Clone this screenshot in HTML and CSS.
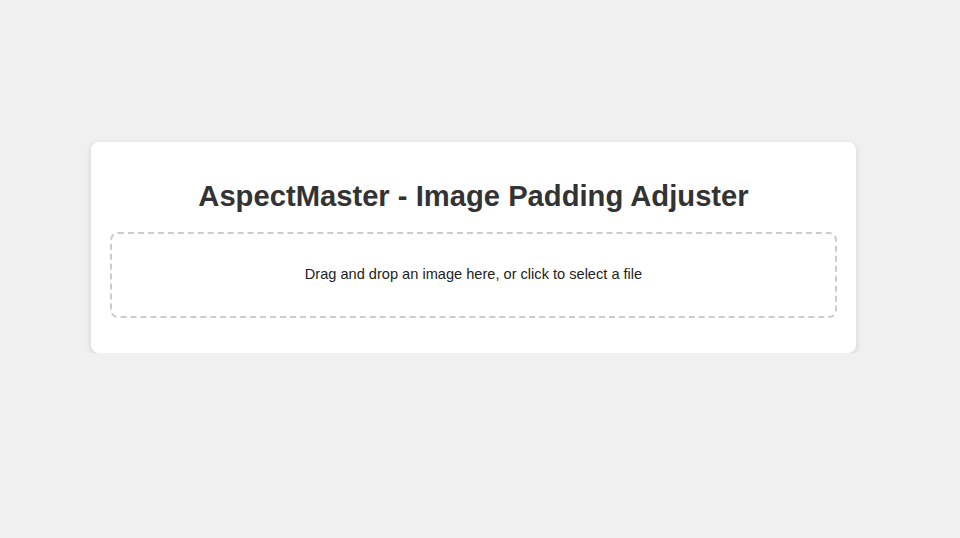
FILE: index.html
```html
<!DOCTYPE html>
<html lang="en">
<head>
  <meta charset="UTF-8" />
  <meta name="viewport" content="width=device-width, initial-scale=1.0"/>
  <title>AspectMaster - Image Padding Adjuster</title>
  <link rel="stylesheet" href="styles.css">
</head>
<body>
  <div class="container">
    <h1>AspectMaster - Image Padding Adjuster</h1>
    <div id="dropZone" class="drop-zone">
      Drag and drop an image here, or click to select a file
    </div>
  </div>
</body>
</html>
```

FILE: styles.css
```css
body {
  font-family: "Liberation Sans", Arial, sans-serif;
  margin: 0; padding: 0;
  background-color: #f0f0f0;
  color: #333;
}
.container {
  width: 765px;
  box-sizing: border-box;
  margin: 142px 0 0 91px;
  padding: 20px 19px 35px;
  background: white;
  border-radius: 8px;
  box-shadow: 0 2px 6px rgba(0,0,0,0.14);
}
h1 {
  font-size: 29.2px;
  line-height: 34px;
  text-align: center;
  margin: 17px 0 19px;
  color: #333;
}
.drop-zone {
  border: 2px dashed #ccc;
  border-radius: 8px;
  padding: 32px 20px 33px;
  text-align: center;
  font-size: 14.6px;
  line-height: 17px;
  color: #222;
  cursor: pointer;
}
```
